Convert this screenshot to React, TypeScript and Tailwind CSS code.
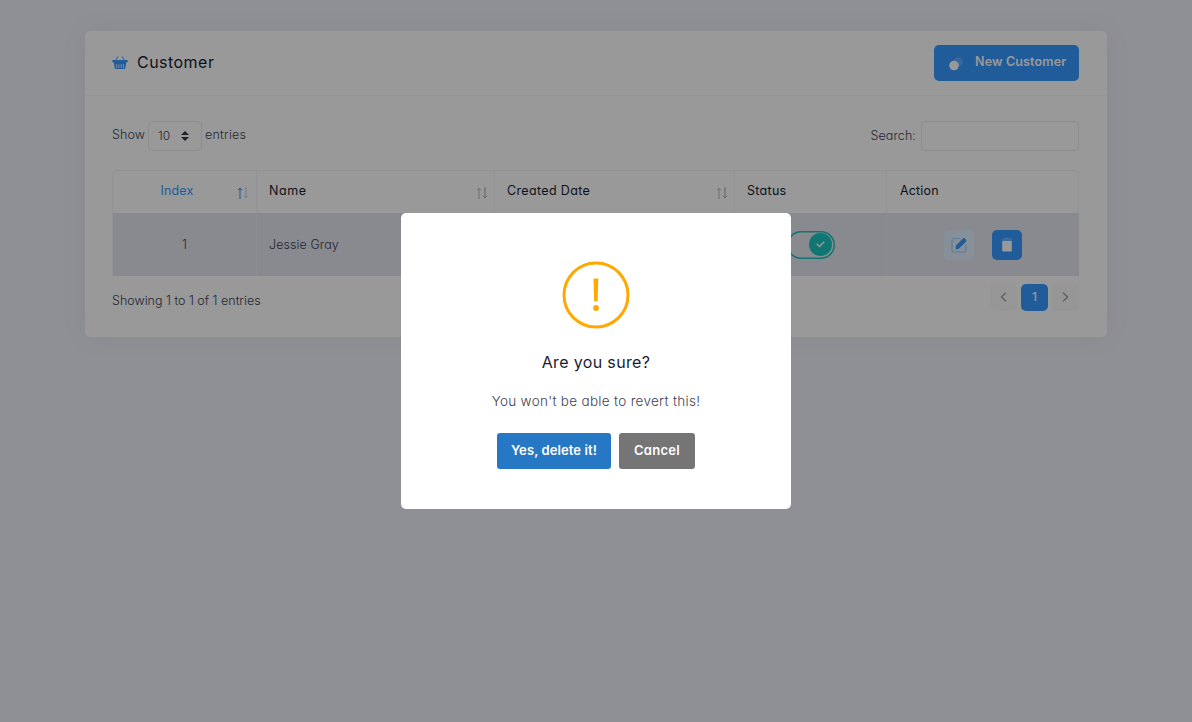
import type { ReactNode } from "react";

function BasketIcon() {
  return (
    <svg width="16" height="14" viewBox="0 0 16 14" fill="none" className="shrink-0">
      <path d="M3.600 4.200L5.700 0.900M12.400 4.200L10.300 0.900" stroke="#3699ff" strokeWidth="1.200" strokeLinecap="round" opacity="0.700" />
      <path
        fillRule="evenodd"
        d="M1 4h14c.5 0 .8.3.8.8v.7c0 .4-.3.7-.8.7h-.7l-1 6.1c-.1.5-.4.8-.9.8H3.600c-.5 0-.8-.3-.9-.8l-1-6.100H1c-.5 0-.8-.3-.8-.7v-.7c0-.5.300-.8.800-.8z"
        fill="#3699ff"
      />
      <path d="M4.600 8.200v4M6.900 8.200v4M9.200 8.200v4M11.500 8.200v4" stroke="#d5e9ff" strokeWidth="1" />
    </svg>
  );
}

function SortIcon({ active = false }: { active?: boolean }) {
  const up = active ? "#3b86f5" : "#b5b5c3";
  const down = active ? "#b4d2f2" : "#a1a1b0";
  return (
    <svg width="12" height="12" viewBox="0 0 12 12" fill="none" strokeWidth="1" className="mt-[3px] shrink-0">
      <path d="M3 12V1.300M1 3.200L3 1.200L5 3.200" stroke={up} />
      <path d="M9 0V10.700M7 8.800L9 10.800L11 8.800" stroke={down} />
    </svg>
  );
}

function HeadCell({ width, children, sort }: { width: string; children: ReactNode; sort?: boolean }) {
  return (
    <div className={`${width} flex h-full shrink-0 items-center justify-between border-r border-[#f4f5f8] pl-3 pr-[6px] text-[#181c32]`}>
      <span>{children}</span>
      {sort && <SortIcon />}
    </div>
  );
}

function Header() {
  return (
    <header className="flex h-[65px] items-center justify-between border-b border-[#f4f5f8] pl-[27px] pr-[28px]">
      <div className="flex items-center gap-[9px]">
        <BasketIcon />
        <h1 className="pb-[2px] text-[16px] leading-6 tracking-[0.47px] text-[#181c32]">Customer</h1>
      </div>
      <button className="flex h-9 w-[145px] items-center rounded-[5px] bg-[#3699ff] pl-[15px] font-semibold text-white">
        <svg width="14" height="14" viewBox="0 0 14 14" className="mr-[12px] mt-[2px] shrink-0">
          <circle cx="9" cy="5" r="4.700" fill="white" opacity="0.200" />
          <circle cx="5" cy="8.500" r="4.800" fill="white" />
        </svg>
        <span className="whitespace-nowrap pb-px text-[12.500px] tracking-[0.15px]">New Customer</span>
      </button>
    </header>
  );
}

function Controls() {
  return (
    <div className="flex h-[30px] items-center justify-between">
      <div className="flex items-center">
        <span className="w-[36px] tracking-[0.1px]">Show</span>
        <span className="mr-[3px] flex h-[30px] w-[54px] items-center justify-between rounded-[5px] border border-[#ebecf1] pl-[9px] pr-[12px] text-[12px]">
          10
          <svg width="8" height="10" viewBox="0 0 8 10" fill="#343a40">
            <path d="M4 0L8 4H0zM4 10L0 6H8z" />
          </svg>
        </span>
        <span className="tracking-[0.25px]">entries</span>
      </div>
      <label className="flex items-center">
        <span className="mr-[5px] pt-px tracking-[0.1px]">Search:</span>
        <input className="h-[30px] w-[158px] rounded-[4px] border border-[#ebecf1] bg-white" />
      </label>
    </div>
  );
}

function Table() {
  return (
    <div className="mt-[19px] rounded-t-[5px] border border-b-0 border-[#f4f5f8]">
      <div className="flex h-[42px] items-center font-normal">
        <div className="flex h-full w-[144px] shrink-0 items-center border-r border-[#f4f5f8] pr-[7px] text-[#3699ff]">
          <span className="flex-1 pl-[4px] text-center tracking-[0.150px]">Index</span>
          <SortIcon active />
        </div>
        <HeadCell width="w-[238px]" sort><span className="tracking-[0.600px]">Name</span></HeadCell>
        <HeadCell width="w-[240px]" sort><span className="tracking-[0.350px]">Created Date</span></HeadCell>
        <HeadCell width="w-[152px]"><span className="tracking-[0.300px]">Status</span></HeadCell>
        <span className="pl-[13px] tracking-[0.150px] text-[#181c32]">Action</span>
      </div>
      <div className="-mr-px flex h-[63px] items-center bg-[#e4e6ef] pt-px">
        <div className="flex h-full w-[144px] shrink-0 items-center justify-center border-r border-[#ebedf3] pt-px">1</div>
        <div className="flex h-full w-[238px] shrink-0 items-center border-r border-[#ebedf3] pl-3 pt-px tracking-[0.080px]">Jessie Gray</div>
        <div className="h-full w-[240px] shrink-0 border-r border-[#ebedf3]" />
        <div className="flex h-full w-[152px] shrink-0 items-center justify-center border-r border-[#ebedf3]">
          <div className="flex h-[28px] w-[48px] items-center justify-end rounded-full pr-[3px] shadow-[inset_0_0_0_1.500px_#1bc5bd]">
            <span className="flex size-[23px] items-center justify-center rounded-full bg-[#1bc5bd]">
              <svg width="9" height="7" viewBox="0 0 9 7" fill="none" stroke="white" strokeWidth="1.400">
                <path d="M0.700 2.800L3.500 5.600L8.300 0.800" />
              </svg>
            </span>
          </div>
        </div>
        <div className="flex flex-1 items-center justify-center gap-[18px] pr-px">
          <button className="flex size-[30px] items-center justify-center rounded-[5px] bg-[#e1f0ff]">
            <svg width="16" height="16" viewBox="0 0 16 16" fill="none">
              <path d="M9 1.500H2.800C1.800 1.500 1 2.300 1 3.300V13.200C1 14.200 1.800 15 2.800 15H13C14 15 14.800 14.200 14.800 13.200V8" stroke="#3699ff" strokeWidth="1.200" opacity="0.400" strokeLinecap="round" />
              <path d="M4.600 12.300L4.900 8.400L12 1.400C12.500.9 13.200.9 13.700 1.400L15.100 2.800C15.600 3.300 15.600 3.900 15.100 4.400L8.300 11.200C7.500 12 6.500 12.300 4.600 12.300Z" fill="#3699ff" />
            </svg>
          </button>
          <button className="flex size-[30px] items-center justify-center rounded-[5px] bg-[#3699ff]">
            <svg width="12" height="16" viewBox="0 0 12 16" fill="white" className="mt-px">
              <path d="M4.500 1C4.500.300 7.500.300 7.500 1V1.500H11.200V2.700H.800V1.500H4.500z" opacity="0.300" />
              <path d="M1.200 3.800H10.800V13.700C10.800 14.300 10.500 14.600 9.900 14.600H2.100C1.500 14.600 1.200 14.300 1.200 13.700z" />
            </svg>
          </button>
        </div>
      </div>
    </div>
  );
}

function Pagination() {
  return (
    <div className="flex gap-1">
      <span className="flex size-[27px] items-center justify-center rounded-[5px] bg-[#fafafc]">
        <svg width="7" height="10" viewBox="0 0 7 10" fill="none" stroke="#a0a1ad" strokeWidth="1.500"><path d="M5.900 0.800L1.500 5L5.900 9.200" /></svg>
      </span>
      <span className="flex size-[27px] items-center justify-center rounded-[5px] bg-[#3699ff] text-[12px] font-medium text-white">1</span>
      <span className="flex size-[27px] items-center justify-center rounded-[5px] bg-[#fafafc]">
        <svg width="7" height="10" viewBox="0 0 7 10" fill="none" stroke="#a0a1ad" strokeWidth="1.500"><path d="M1.100 0.800L5.500 5L1.100 9.200" /></svg>
      </span>
    </div>
  );
}

function ConfirmDialog() {
  return (
    <div className="fixed inset-0 flex items-center justify-center bg-black/40">
      <div role="dialog" className="flex h-[296px] w-[390px] flex-col items-center rounded-[5px] bg-white pt-[48px]">
        <svg width="68" height="68" viewBox="0 0 68 68" fill="none">
          <circle cx="34" cy="34" r="32" stroke="#ffa800" strokeWidth="3" />
          <path d="M31.500 17.500H36.300L35.600 40.500H32.200z" fill="#ffa800" />
          <circle cx="34" cy="47" r="2.900" fill="#ffa800" />
        </svg>
        <h2 className="mt-[21px] text-[16px] font-normal leading-6 tracking-[0.350px] text-[#181c32]">Are you sure?</h2>
        <p className="mt-[17px] text-[13.500px] leading-5 tracking-[0.300px]">You won't be able to revert this!</p>
        <div className="mt-[22px] flex gap-2 font-semibold text-white">
          <button className="h-9 w-[114px] rounded-[3px] bg-[#2778c4] text-[13px] tracking-[0.100px]">Yes, delete it!</button>
          <button className="h-9 w-[76px] rounded-[3px] bg-[#757575] text-[13px] tracking-[0.300px]">Cancel</button>
        </div>
      </div>
    </div>
  );
}

export default function App() {
  return (
    <div className="h-screen overflow-hidden bg-[#eef0f8] pl-[85px] pt-[30.500px] font-[Inter,sans-serif] text-[12.500px] font-light text-[#3f4254] [font-feature-settings:'cv11']">
      <main className="h-[306.500px] w-[1022px] rounded-[5px] bg-white shadow-[0_0_30px_0_rgba(82,63,105,0.05)]">
        <div className="font-normal">
          <Header />
        </div>
        <div className="pl-[27px] pr-[28px] pt-[25px]">
          <Controls />
          <Table />
          <div className="mt-[8px] flex justify-between">
            <span className="mt-[8px]">Showing 1 to 1 of 1 entries</span>
            <Pagination />
          </div>
        </div>
      </main>
      <ConfirmDialog />
    </div>
  );
}
